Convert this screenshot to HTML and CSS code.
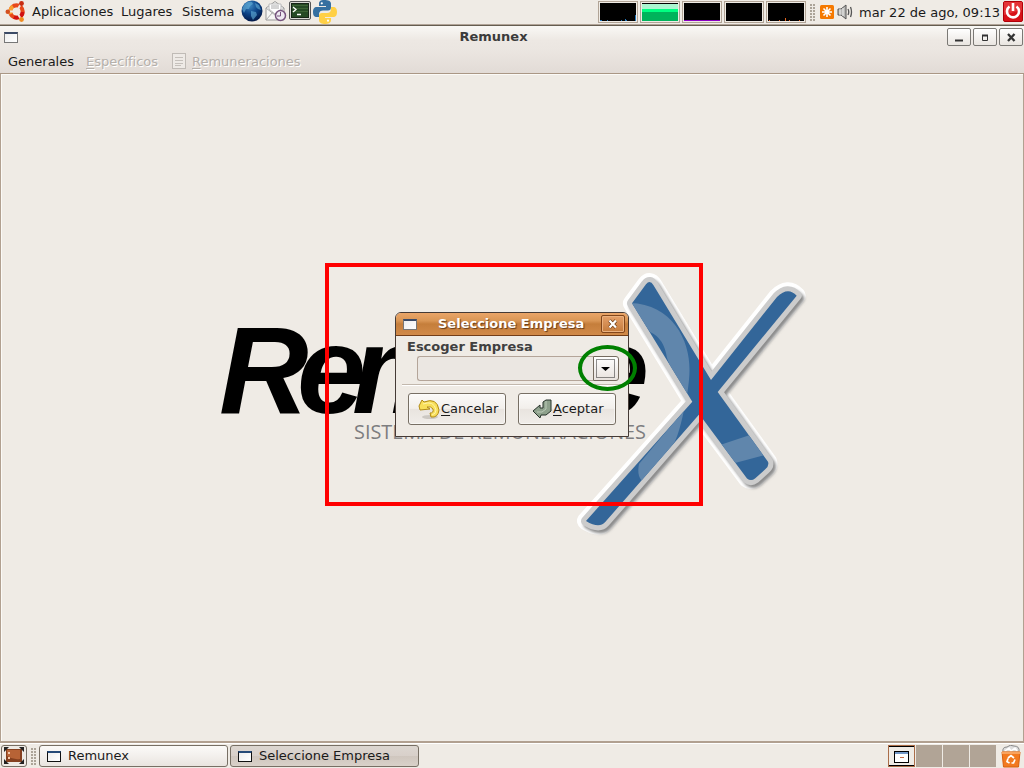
FILE: index.html
```html
<!DOCTYPE html>
<html lang="es">
<head>
<meta charset="utf-8">
<title>Remunex</title>
<link rel="stylesheet" href="styles.css">
</head>
<body>
<header class="panel">
  <nav class="panel-menus">
    <svg class="ubuntu" width="22" height="23" viewBox="0 0 22 23"><circle cx="11.500" cy="11.500" r="6" fill="none" stroke="#e8481a" stroke-width="4.500"/><path d="M6 14A6 6 0 0 1 8 6.500" fill="none" stroke="#f8a030" stroke-width="4"/><path d="M17.500 12A6 6 0 0 1 9 17" fill="none" stroke="#d01010" stroke-width="4"/><path d="M11.500 11.500L1 11.500M11.500 11.500L17 2M11.500 11.500L17 21" stroke="#efebe5" stroke-width="2"/><circle cx="11.500" cy="11.500" r="4" fill="#efebe5"/><circle cx="2.800" cy="11.800" r="2.300" fill="#d35020"/><circle cx="16.500" cy="3.500" r="2.400" fill="#c82d12"/><circle cx="16.500" cy="19.500" r="2.400" fill="#f08c20"/></svg>
    <span class="menu-apps">Aplicaciones</span><span class="menu-places">Lugares</span><span class="menu-system">Sistema</span>
  </nav>
  <div class="launchers">
    <svg width="22" height="22" viewBox="0 0 22 22"><defs><radialGradient id="globe" cx=".4" cy=".25" r=".8"><stop offset="0" stop-color="#3d86c0"/><stop offset=".5" stop-color="#0b4286"/><stop offset="1" stop-color="#021440"/></radialGradient></defs><circle cx="11" cy="11" r="10.500" fill="url(#globe)"/><path d="M3 5Q6 1 11 2L12 4 9 6 8 9 5 9 3 13 1 9ZM14 3L18 5 20 10 17 9 15 7ZM10 11L15 12 16 15 12 20 10 16Z" fill="#65b0d8" opacity=".6"/></svg>
    <svg width="22" height="22" viewBox="0 0 22 22"><path d="M1 8L10 1.500 19 8V20H1Z" fill="#f7f7f5" stroke="#999"/><path d="M4 9V4H16V9L10 14Z" fill="#fff" stroke="#bbb"/><path d="M6 6H14M6 8H14M1 20L8 12M1 8L10 15 19 8" fill="none" stroke="#aaa"/><circle cx="15.500" cy="15.500" r="5" fill="#eee9f1" stroke="#75527d" stroke-width="1.500"/><path d="M15.500 12V16H12" fill="none" stroke="#75527d"/></svg>
    <svg width="22" height="22" viewBox="0 0 22 22"><rect x=".5" y="1.500" width="21" height="18" rx="1.500" fill="#d8d8d4" stroke="#555"/><rect x="2.500" y="3.500" width="17" height="14" fill="#254a25" stroke="#172517"/><path d="M3 5.500H19M3 8.500H19M3 11.500H19" stroke="#3d6336"/><path d="M4 7L7 9.500 4 12M8 14.500H12" fill="none" stroke="#fff" stroke-width="1.300"/></svg>
    <svg width="24" height="24" viewBox="0 0 24 24"><path d="M11.500 0C7 0 6 1.500 6 4V6H13V7H4C1 7 0 9 0 12S1 17 4 17H6V14C6 11.500 8 10.500 10 10.500H15Q18 10.500 18 7V3.500C18 1 15 0 11.500 0Z" fill="#3670a0"/><path d="M18 7H20C23 7 24 9 24 12S23 17 20 17H12V18H18V20C18 23 15 24 12 24S6 23 6 20V16Q6 13 9 13H14Q18 13 18 9Z" fill="#ffd045"/><circle cx="8.800" cy="3.300" r="1.100" fill="#fff"/><circle cx="15" cy="20.700" r="1.100" fill="#fff"/></svg>
  </div>
  <div class="monitors">
    <svg class="mon" viewBox="0 0 36 18"><path d="M0 17h2v1h-2zM7 17h1v1h-1zM21 17h1v1h-1zM25 16h1v2h-1zM26 17h1v1h-1zM35 12h1v6h-1z" fill="#2277bb"/></svg>
    <svg class="mon" viewBox="0 0 36 18"><path d="M0 1H36V6H0Z" fill="#aaf5d0"/><path d="M0 6H36V9H0Z" fill="#00ff82"/><path d="M0 9H36V18H0Z" fill="#00b35b"/></svg>
    <svg class="mon" viewBox="0 0 36 18"><path d="M0 17H36V18H0Z" fill="#8b00c3"/></svg>
    <svg class="mon" viewBox="0 0 36 18"></svg>
    <svg class="mon" viewBox="0 0 36 18"><path d="M1 17h1v1h-1zM11 17h1v1h-1zM17 15h1v3h-1zM21 17h1v1h-1zM31 17h1v1h-1z" fill="#e5661d"/></svg>
  </div>
  <div class="tray">
    <i class="grip"></i>
    <svg class="update" width="14" height="14" viewBox="0 0 14 14"><rect width="14" height="14" rx="1.500" fill="#f57900"/><path d="M7 2V12M2 7H12M3.500 3.500L10.500 10.500M10.500 3.500L3.500 10.500" stroke="#fff" stroke-width="1.600"/></svg>
    <svg class="sound" width="16" height="16" viewBox="0 0 16 16"><path d="M1 5H4L9 1V15L4 11H1Z" fill="#b8b8b5" stroke="#555"/><path d="M3 5V11M6 4V12" stroke="#eee"/><path d="M11 5Q12.500 8 11 11M13.500 3Q15.500 8 13.500 13" fill="none" stroke="#555" stroke-width="1.300"/></svg>
    <span class="clock">mar 22 de ago, 09:13</span>
    <svg class="power" width="20" height="21" viewBox="0 0 20 21"><rect x=".5" y=".5" width="19" height="20" rx="1.500" fill="#d71117" stroke="#b00009"/><path d="M1 1H19V9L1 14Z" fill="#ed4b4b" opacity=".6"/><path d="M6.500 5.500A6 6 0 1 0 13.500 5.500" fill="none" stroke="#fff" stroke-width="2.600"/><path d="M10 2V10" stroke="#fff" stroke-width="2.600"/></svg>
  </div>
</header>

<main class="window">
  <div class="titlebar">
    <i class="win-icon pale"></i><span class="win-title">Remunex</span>
    <div class="win-buttons">
      <button class="win-btn"><svg width="22" height="16"><path d="M7 11.500H15" stroke="#333" stroke-width="2"/></svg></button>
      <button class="win-btn"><svg width="22" height="16"><path d="M8.500 6V11.500H13.500V6" fill="none" stroke="#333"/><path d="M8 6.500H14" stroke="#333" stroke-width="2"/></svg></button>
      <button class="win-btn"><svg width="22" height="16"><path d="M8 5L14.500 12M14.500 5L8 12" stroke="#333" stroke-width="2.300"/></svg></button>
    </div>
  </div>
  <nav class="menubar">
    <span class="m-general">Generales</span><span class="off m-specific"><u>E</u>specíficos</span>
    <svg class="doc" width="14" height="16"><rect x=".5" y=".5" width="13" height="15" fill="#eeeae6" stroke="#c0bbb6"/><path d="M3 4.500H11M3 7.500H11M3 10.500H11M3 12.500H9" stroke="#c5c0bb"/></svg>
    <span class="off m-pay"><u>R</u>emuneraciones</span>
  </nav>
  <section class="workspace">
    <svg class="logo" width="610" height="290" viewBox="210 260 610 290">
      <defs>
        <filter id="soft" x="-10%" y="-10%" width="120%" height="120%"><feGaussianBlur stdDeviation="1.600"/></filter>
        <path id="cross" d="M632 303.300L646 284.300Q650 279.300 653.500 285.300L711 380 777 297Q788 286 796.700 295.700L717.700 392 768 461.700Q769.500 466 765 469.500L755 478.500Q751 481.500 747 478.500L699.300 414.300 605 522.300Q599 529 586 521L692.300 401.700Z"/>
        <clipPath id="cross-clip"><use href="#cross"/></clipPath>
      </defs>
      <text class="brand" y="413" x="219 297 352 447 514 580">Remune</text>
      <text class="tagline" x="354" y="439" textLength="292" lengthAdjust="spacingAndGlyphs">SISTEMA DE REMUNERACIONES</text>
      <use href="#cross" fill="#fff" stroke="#fff" stroke-width="18" stroke-linejoin="round"/>
      <use href="#cross" transform="translate(2.500 3)" fill="#8c8c8c" stroke="#8c8c8c" stroke-width="10" stroke-linejoin="round" filter="url(#soft)"/>
      <use href="#cross" fill="#ccc" stroke="#ccc" stroke-width="10" stroke-linejoin="round"/>
      <use href="#cross" fill="#336699"/>
      <g clip-path="url(#cross-clip)" fill="#6086ac"><path d="M630 303C672 304 690 340 689.500 370Q689.500 380 687 395L675 380 667 358Q664 338 650 332Z"/><path d="M684 410Q678 439 672 446L645 483Q636 478 639 464Z"/><path d="M720 445L750 435 765 455 735 463Z"/></g>
    </svg>
    <div class="selection"></div>
    <section class="dialog">
      <div class="dialog-title"><i class="win-icon pale"></i><span>Seleccione Empresa</span><button class="dialog-close"><svg width="22" height="16"><path d="M7.500 4.500L14 11.500M14 4.500L7.500 11.500" stroke="#6b3a14" stroke-width="3.600"/><path d="M7.500 4.500L14 11.500M14 4.500L7.500 11.500" stroke="#fff" stroke-width="2.300"/></svg></button></div>
      <div class="dialog-body">
        <label>Escoger Empresa</label>
        <div class="combo"><span class="combo-field"></span><button class="combo-btn"><svg width="19" height="19"><rect x=".5" y=".5" width="18" height="18" fill="none" stroke="#222" stroke-dasharray="1 1"/><path d="M5 8H14L9.500 12Z"/></svg></button></div>
        <hr>
        <div class="actions">
          <button class="action"><svg width="23" height="22" viewBox="0 0 23 22"><ellipse cx="12" cy="19" rx="8" ry="2" fill="#ccc8c2"/><path d="M1 8L4 2 6 4Q19-1 21 12Q20 20 13 19L12 15Q16 15 15 11Q13 8 9 9L12 11 2 12Z" fill="#f8df5a" stroke="#b18a16"/><path d="M5 6Q16 2 18 12Q18 16 14 17" fill="none" stroke="#fff5ab"/></svg><span><u>C</u>ancelar</span></button>
          <button class="action ok"><svg width="20" height="20" viewBox="0 0 20 20"><path d="M1 12L8 6V9H11V3L14 1H19V12L14 16H9L8 19Z" fill="#8ea18c" stroke="#26332a"/><path d="M14 2V10L10 13H5" fill="none" stroke="#bbcab8"/></svg><span><u>A</u>ceptar</span></button>
        </div>
      </div>
    </section>
    <div class="ring"></div>
  </section>
</main>

<footer class="taskbar">
  <button class="show-desktop"><svg width="20" height="17" viewBox="0 0 20 17"><rect x="2" y="2" width="16" height="13" fill="#85401f"/><path d="M3 3H16V12Q9 13 3 9Z" fill="#b76336"/><path d="M0 0H5L0 5ZM20 0H15L20 5ZM0 17H5L0 12ZM20 17H15L20 12Z" fill="#222"/><path d="M4 5H6V7H4ZM4 10H6V12H4Z" fill="#f3c8aa"/></svg></button>
  <i class="grip"></i>
  <button class="task"><i class="win-icon"></i>Remunex</button>
  <button class="task active"><i class="win-icon"></i>Seleccione Empresa</button>
  <div class="pager"><span class="desk current"><i></i></span><span class="desk"></span><span class="desk"></span><span class="desk"></span></div>
  <svg class="trash" width="20" height="23" viewBox="0 0 20 23"><path d="M2 7Q1 2 6 2Q9-1 13 1Q19 1 18 7Z" fill="#ddd" stroke="#888"/><path d="M4 6L8 3 10 6 14 3 16 6" fill="none" stroke="#fff" stroke-width="1.500"/><path d="M1 7H19L17.500 22H2.500Z" fill="#f27a20" stroke="#d95f0e"/><path d="M1 6.500H19V9H1Z" fill="#f9a35e"/><path d="M7 13L10 10.500 13 13M14 14.500L12.500 18H10.500M8.500 18L6 16.500 7 13.500" fill="none" stroke="#fff" stroke-width="1.700"/></svg>
</footer>
</body>
</html>
```
FILE: styles.css
```css
* { box-sizing: border-box; }
body { margin: 0; width: 1024px; height: 768px; overflow: hidden; display: flex; flex-direction: column; background: #efebe5; color: #1a1a1a; font: 13px/16px "DejaVu Sans", sans-serif; }
button { font: inherit; color: inherit; padding: 0; margin: 0; }
svg { display: block; flex: none; }
span { white-space: nowrap; }
.panel { height: 26px; flex: none; display: flex; align-items: flex-start; border-bottom: 1px solid #655d50; box-shadow: inset 0 -1px #b1a498; }
.panel-menus { width: 241px; display: flex; padding-left: 5px; }
.ubuntu { margin-right: 5px; }
.panel-menus span { padding-top: 4px; }
.menu-apps { width: 89px; }
.menu-places { width: 61px; }
.launchers { display: flex; width: 357px; gap: 2px; padding-top: 0; }
.monitors { display: flex; gap: 2px; padding-top: 1px; }
.mon { width: 40px; height: 22px; padding: 1px; border: 1px solid #b1a496; background: #000 content-box; outline: 0; }
.tray { display: flex; align-items: flex-start; padding-left: 4px; }
.grip { display: block; flex: none; width: 5px; height: 17px; margin-top: 4px; background: radial-gradient(circle at 1px 1px, #aaa297 .7px, transparent 1px) 0 0/3px 3px; }
.update { margin: 5px 0 0 5px; }
.sound { margin: 4px 0 0 3px; }
.clock { margin: 5px 0 0 6px; width: 144px; }
.power { margin-top: 1px; }
.window { height: 717px; flex: none; display: flex; flex-direction: column; border-bottom: 2px solid #b1a090; }
.titlebar { height: 24px; flex: none; display: flex; background: linear-gradient(#f9f8f5, #ede8e3 60%, #ebe6e1); padding: 1px 1px 0 4px; }
.win-icon { display: block; flex: none; width: 14px; height: 11px; background: linear-gradient(135deg, #eee, #fff); border: 1px solid #111; border-top: 2px solid #254a78; }
.pale { border-color: #3b4a66 #777 #777; }
.titlebar .win-icon { margin-top: 5px; }
.win-title { flex: 1; padding: 2px 0 0 80px; text-align: center; font-weight: bold; color: #3b3b3b; font-size: 13px; }
.win-title { padding-left: 8px; }
.titlebar .win-title { margin-right: -18px; margin-left: -4px; }
.win-buttons { display: flex; gap: 2px; position: relative; }
.win-btn { width: 24px; height: 18px; margin-top: 1px; border: 1px solid #7b7975; border-radius: 2px; background: linear-gradient(#fff, #e9e5e0); display: flex; }
.menubar { height: 24px; flex: none; display: flex; background: linear-gradient(#ebe6e1, #e2dbd6); border-bottom: 1px solid #aa9785; padding: 4px 0 0 8px; }
.m-general { width: 78px; }
.off { color: #b5b0ab; text-shadow: 1px 1px #fff; }
.m-specific { width: 86px; }
.doc { margin-right: 6px; margin-top: -1px; }
u { text-decoration-thickness: 1px; text-underline-offset: 2px; }
.workspace { flex: 1; position: relative; background: #efebe5; border: solid #b1a090; border-width: 0 1px; box-shadow: inset 1px 1px #fbfaf7; }
.logo { position: absolute; left: 209px; top: 186px; }
.brand { font: italic bold 124px "Liberation Sans", sans-serif; fill: #000; }
.tagline { font: 20.500px "Open Sans", sans-serif; fill: #7d7d7f; }
.selection { position: absolute; left: 324px; top: 189px; width: 378px; height: 243px; border: 4px solid #f00; }
.dialog { position: absolute; left: 394px; top: 238px; width: 234px; height: 125px; border: 1px solid #453a35; border-radius: 6px 6px 0 0; background: #efebe5; overflow: hidden; }
.dialog-title { height: 23px; display: flex; border-bottom: 1px solid #733e18; background: linear-gradient(#eaa568, #d99655 35%, #c57e3b 50%, #d18a49); color: #fff; font-weight: bold; text-shadow: 1px 1px 1px #633a1a; }
.dialog-title .win-icon { margin: 6px 0 0 7px; }
.dialog-title span { width: 149px; margin: 3px 14px 0 21px; }
.dialog-close { width: 24px; height: 18px; margin-top: 2px; border: 1px solid #82461b; border-radius: 2px; background: linear-gradient(#e5a069, #c47b3c); box-shadow: inset 0 0 0 1px #eab17e; }
.dialog-body { padding: 3px 6px 0; }
.dialog-body label { display: block; margin-left: 5px; font-weight: bold; color: #404040; height: 17px; }
.combo { display: flex; margin-left: 15px; height: 25px; }
.combo-field { width: 176px; border: 1px solid #b4a599; border-right: 0; border-radius: 3px 0 0 3px; background: #ebe7e2; }
.combo-btn { width: 26px; padding: 2px; border: 1px solid #756b5f; border-radius: 0 3px 3px 0; background: linear-gradient(#fff, #e8e2dd); display: flex; }
hr { margin: 3px 0 7px; border: 0; height: 2px; background: #c2b8ad; border-bottom: 1px solid #fff; }
.actions { display: flex; gap: 12px; padding-left: 6px; }
.action { width: 98px; height: 32px; border: 1px solid #776f64; border-radius: 3px; background: linear-gradient(#fbfaf8, #f2efeb 48%, #e9e4df 50%, #f0ede9); display: flex; align-items: center; padding-left: 9px; box-shadow: inset 0 0 0 1px #fff8; }
.action.ok { padding-left: 13px; gap: 1px; }
.ring { position: absolute; left: 577px; top: 271px; width: 59px; height: 46px; border: 4px solid #008000; border-radius: 50%; }
.taskbar { height: 25px; flex: none; display: flex; align-items: flex-start; padding: 2px 0 0 1px; box-shadow: inset 0 1px #fff; }
.show-desktop { width: 26px; height: 22px; border: 1px solid #776f64; border-radius: 3px; background: #eeeae4; display: flex; padding: 1px 2px; }
.taskbar .grip { margin: 3px 3px 0 4px; }
.task { width: 189px; height: 22px; border: 1px solid #776f64; border-radius: 3px; background: linear-gradient(#fbfaf8, #f3f0ed 48%, #e9e4df); display: flex; align-items: center; gap: 7px; padding-left: 7px; margin-right: 2px; }
.task.active { background: linear-gradient(#dcd6d0, #d8d0ca 48%, #cfc6be 50%, #d9d1c9); }
.pager { margin-left: 467px; display: flex; gap: 1px; height: 22px; }
.desk { width: 26px; background: #b1a496; }
.current { width: 27px; border: 1px solid #000; outline: 1px solid #aa6d49; outline-offset: -1px; background: #efebe5; padding: 4px 5px; border-width: 2px 1px; }
.current i { display: block; width: 15px; height: 12px; border: 1px solid #000; background: linear-gradient(#c66b46, #c66b46) center/4px 1px no-repeat, linear-gradient(#7196c6 2px, #fff 2px); }
.trash { margin-left: 5px; }
```
